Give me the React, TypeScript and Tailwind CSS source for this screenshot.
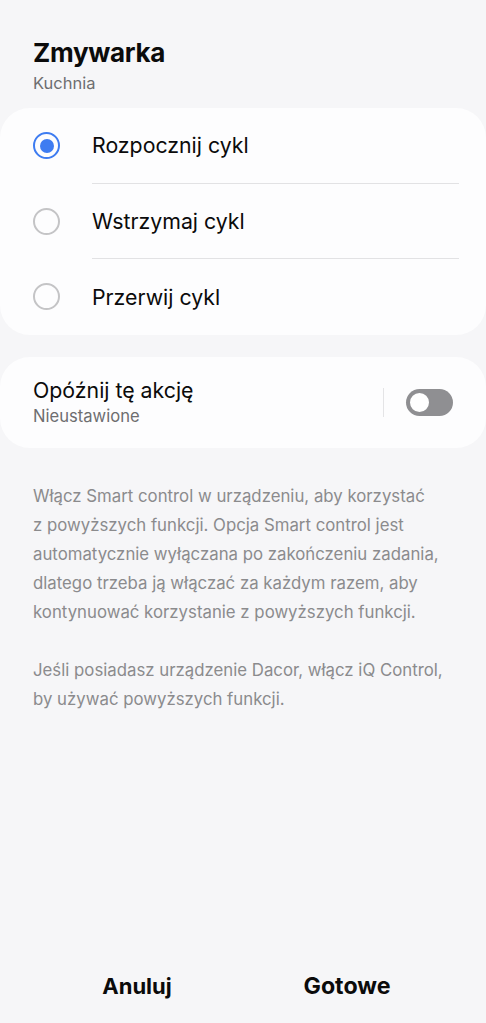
import React from 'react';

const options = ['Rozpocznij cykl', 'Wstrzymaj cykl', 'Przerwij cykl'];

function Radio({ checked }: { checked: boolean }) {
  if (checked) {
    return (
      <span className="flex h-[27px] w-[27px] items-center justify-center rounded-full border-[2.5px] border-[#3e7cf1]">
        <span className="h-[14px] w-[14px] rounded-full bg-[#3e7cf1]" />
      </span>
    );
  }
  return <span className="h-[27px] w-[27px] rounded-full border-2 border-[#c4c4c6]" />;
}

export default function App() {
  return (
    <div
      className="flex h-[1023px] w-[486px] flex-col bg-[#f6f6f8] text-[#0b0b0b]"
      style={{ fontFamily: 'Inter, "Noto Sans", sans-serif' }}
    >
      <div className="px-[33px] pt-[37px]">
        <h1 className="text-[26px] font-bold leading-[32px] tracking-[-0.3px]">Zmywarka</h1>
        <p className="mt-[3px] text-[16.5px] leading-[22px] text-[#6e6e70]">Kuchnia</p>
      </div>

      <div className="mt-[14px] rounded-[30px] bg-[#fdfdfe]">
        {options.map((o, i) => (
          <div key={o} className="flex h-[75.5px] items-center">
            <div className="flex w-[92px] justify-center pl-[1px]">
              <Radio checked={i === 0} />
            </div>
            <div
              className={`flex h-full flex-1 items-center mr-[27px] ${
                i < options.length - 1 ? 'border-b border-[#e2e2e4]' : ''
              }`}
            >
              <span className="text-[21.3px] leading-[26px]">{o}</span>
            </div>
          </div>
        ))}
      </div>

      <div className="mt-[22px] flex h-[91px] items-center rounded-[30px] bg-[#fdfdfe] pl-[33px] pr-[33px]">
        <div className="flex-1">
          <p className="text-[21.3px] leading-[26px]">Opóźnij tę akcję</p>
          <p className="mt-[3px] text-[16.6px] leading-[21px] text-[#6e6e70]">Nieustawione</p>
        </div>
        <div className="h-[29px] w-px bg-[#e4e4e6]" />
        <div className="ml-[22px] flex h-[27px] w-[47px] items-center rounded-full bg-[#8f8f92] px-[2px]">
          <span className="h-[23px] w-[23px] rounded-full border-2 border-[#8f8f92] bg-white" />
        </div>
      </div>

      <div className="mt-[34px] px-[33px] text-[16.8px] leading-[29px] text-[#8b8b8d]">
        <p>
          Włącz Smart control w urządzeniu, aby korzystać
          <br />z powyższych funkcji. Opcja Smart control jest
          <br />
          automatycznie wyłączana po zakończeniu zadania,
          <br />
          dlatego trzeba ją włączać za każdym razem, aby
          <br />
          kontynuować korzystanie z powyższych funkcji.
        </p>
        <p className="mt-[29px]">
          Jeśli posiadasz urządzenie Dacor, włącz iQ Control,
          <br />
          by używać powyższych funkcji.
        </p>
      </div>

      <div className="mt-auto flex h-[74px] items-start pt-[23px]">
        <button className="flex-1 pl-[32px] text-[22px] font-bold leading-[28px]">Anuluj</button>
        <button className="flex-1 pr-[34px] text-[23.2px] font-bold leading-[28px]">Gotowe</button>
      </div>
    </div>
  );
}
